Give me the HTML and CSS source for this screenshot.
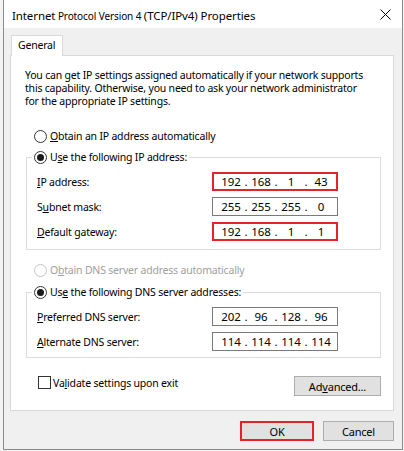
FILE: index.html
```html
<!DOCTYPE html>
<html>
<head>
<meta charset="utf-8">
<link rel="stylesheet" href="styles.css">
</head>
<body>
<div class="window">
  <div class="titlebar">
    <span class="title"><span class="t-big">Internet</span> <span class="t-small">Protocol Version 4</span> <span class="t-big">(TCP/IPv4) Properties</span></span>
    <svg class="close" width="11" height="11" viewBox="0 0 11 11"><path d="M0.5 0.5 L10.5 10.5 M10.5 0.5 L0.5 10.5" stroke="#000" stroke-width="1" fill="none"/></svg>
  </div>
  <div class="body">
    <div class="tabs"><div class="tab">General</div></div>
    <div class="pane">
      <p class="intro">You can get IP settings assigned automatically if your network supports<br>this capability. Otherwise, you need to ask your network administrator<br>for the appropriate IP settings.</p>

      <div class="radio-row first"><span class="radio"></span><span><u>O</u>btain an IP address automatically</span></div>

      <fieldset class="group">
        <legend class="legend"><span class="radio checked"></span><span>U<u>s</u>e the following IP address:</span></legend>
        <div class="rows">
          <div class="row"><span class="label"><u>I</u>P address:</span><div class="ip hl"><span class="oct">192</span><span class="dot">.</span><span class="oct">168</span><span class="dot">.</span><span class="oct">1</span><span class="dot">.</span><span class="oct">43</span></div></div>
          <div class="row"><span class="label">S<u>u</u>bnet mask:</span><div class="ip"><span class="oct">255</span><span class="dot">.</span><span class="oct">255</span><span class="dot">.</span><span class="oct">255</span><span class="dot">.</span><span class="oct">0</span></div></div>
          <div class="row"><span class="label"><u>D</u>efault gateway:</span><div class="ip hl"><span class="oct">192</span><span class="dot">.</span><span class="oct">168</span><span class="dot">.</span><span class="oct">1</span><span class="dot">.</span><span class="oct">1</span></div></div>
        </div>
      </fieldset>

      <div class="radio-row dns-auto disabled"><span class="radio"></span><span>O<u>b</u>tain DNS server address automatically</span></div>

      <fieldset class="group group-dns">
        <legend class="legend"><span class="radio checked"></span><span>Us<u>e</u> the following DNS server addresses:</span></legend>
        <div class="rows rows-dns">
          <div class="row"><span class="label"><u>P</u>referred DNS server:</span><div class="ip"><span class="oct">202</span><span class="dot">.</span><span class="oct">96</span><span class="dot">.</span><span class="oct">128</span><span class="dot">.</span><span class="oct">96</span></div></div>
          <div class="row"><span class="label"><u>A</u>lternate DNS server:</span><div class="ip"><span class="oct">114</span><span class="dot">.</span><span class="oct">114</span><span class="dot">.</span><span class="oct">114</span><span class="dot">.</span><span class="oct">114</span></div></div>
        </div>
      </fieldset>

      <div class="bottom-row">
        <div class="check-row"><span class="checkbox"></span><span>Va<u>l</u>idate settings upon exit</span></div>
        <div class="button advanced">Ad<u>v</u>anced...</div>
      </div>
    </div>
    <div class="footer">
      <div class="button ok">OK</div>
      <div class="button cancel">Cancel</div>
    </div>
  </div>
</div>
</body>
</html>
```

FILE: styles.css
```css
* { box-sizing: border-box; }
html, body { margin: 0; padding: 0; }
body {
  background: #f3f3f3;
  font-family: "Noto Sans", "Open Sans", sans-serif;
  font-size: 10.5px;
  letter-spacing: -0.2px;
  color: #000;
}
u { text-decoration: underline; text-underline-offset: 1px; }

.window {
  margin-left: 3px;
  width: 400px;
  height: 450px;
  border: 1px solid #8c8c8c;
  border-top: none;
  background: #f0f0f0;
  display: flex;
  flex-direction: column;
}

.titlebar {
  height: 28px;
  background: #fff;
  display: flex;
  align-items: center;
  justify-content: space-between;
  padding: 0 11px 0 8px;
}
.title { white-space: nowrap; line-height: 16px; padding-top: 3px; }
.t-big { font-size: 11.5px; letter-spacing: -0.1px; }
.t-small { font-size: 10px; letter-spacing: -0.1px; }
.close { display: block; }

.body {
  flex: 1;
  padding: 7px 8px 0 6px;
  display: flex;
  flex-direction: column;
}

.tabs { display: flex; padding-left: 1px; }
.tab {
  position: relative;
  z-index: 1;
  height: 21px;
  width: 52px;
  margin-bottom: -1px;
  background: #fff;
  border: 1px solid #d9d9d9;
  border-bottom: none;
  padding-left: 6px;
  line-height: 19px;
}

.pane {
  width: 384px;
  background: #fff;
  border: 1px solid #d9d9d9;
  padding: 13px 12px 14px 14px;
}

.intro {
  margin: 0;
  line-height: 13px;
  white-space: nowrap;
}

.radio-row {
  display: flex;
  align-items: center;
  height: 16px;
  margin-left: 9px;
  gap: 3px;
}
.radio-row.first { margin-top: 20px; }
.radio-row.dns-auto { margin-top: 12px; }
.disabled { color: #a0a0a0; }
.disabled .radio { border-color: #c4c4c4; }

.radio {
  width: 13px;
  height: 13px;
  border: 1px solid #333;
  border-radius: 50%;
  background: #fff;
  flex: none;
  display: flex;
  align-items: center;
  justify-content: center;
}
.radio.checked::after {
  content: "";
  width: 7px;
  height: 7px;
  border-radius: 50%;
  background: #1a1a1a;
}

.group {
  margin: 5px 0 0 1px;
  padding: 0;
  border: 1px solid #dcdcdc;
  min-width: 0;
}
.group-dns { margin-top: 6px; }
.legend {
  margin-left: 5px;
  padding: 0 2px;
  height: 16px;
  display: flex;
  align-items: center;
  gap: 3px;
}

.rows {
  display: flex;
  flex-direction: column;
  gap: 6px;
  padding: 7px 42px 8px 10px;
}
.rows-dns { padding-bottom: 6px; }
.row {
  display: flex;
  align-items: center;
  justify-content: space-between;
  height: 19px;
}

.ip {
  width: 126px;
  height: 19px;
  border: 1px solid #7a7a7a;
  padding-left: 6px;
  display: flex;
  align-items: center;
  font-size: 11.5px;
  letter-spacing: 0;
}
.ip.hl {
  border: 2px solid #e8222b;
  padding-left: 5px;
}
.oct { width: 24px; text-align: center; }
.dot { width: 6px; text-align: center; }

.bottom-row {
  margin-top: 18px;
  padding-left: 13px;
  display: flex;
  justify-content: space-between;
  align-items: flex-start;
}
.check-row {
  display: flex;
  align-items: center;
  gap: 2px;
  height: 13px;
}
.checkbox {
  width: 13px;
  height: 13px;
  border: 1px solid #333;
  background: #fff;
  flex: none;
}

.button {
  height: 20px;
  background: #e1e1e1;
  border: 1px solid #adadad;
  display: flex;
  align-items: center;
  justify-content: center;
  font-size: 11px;
}
.advanced { width: 87px; }

.footer {
  margin-top: 10px;
  display: flex;
  justify-content: flex-end;
  gap: 9px;
}
.ok {
  width: 74px;
  border: 2px solid #e8222b;
}
.cancel { width: 71px; }
```
